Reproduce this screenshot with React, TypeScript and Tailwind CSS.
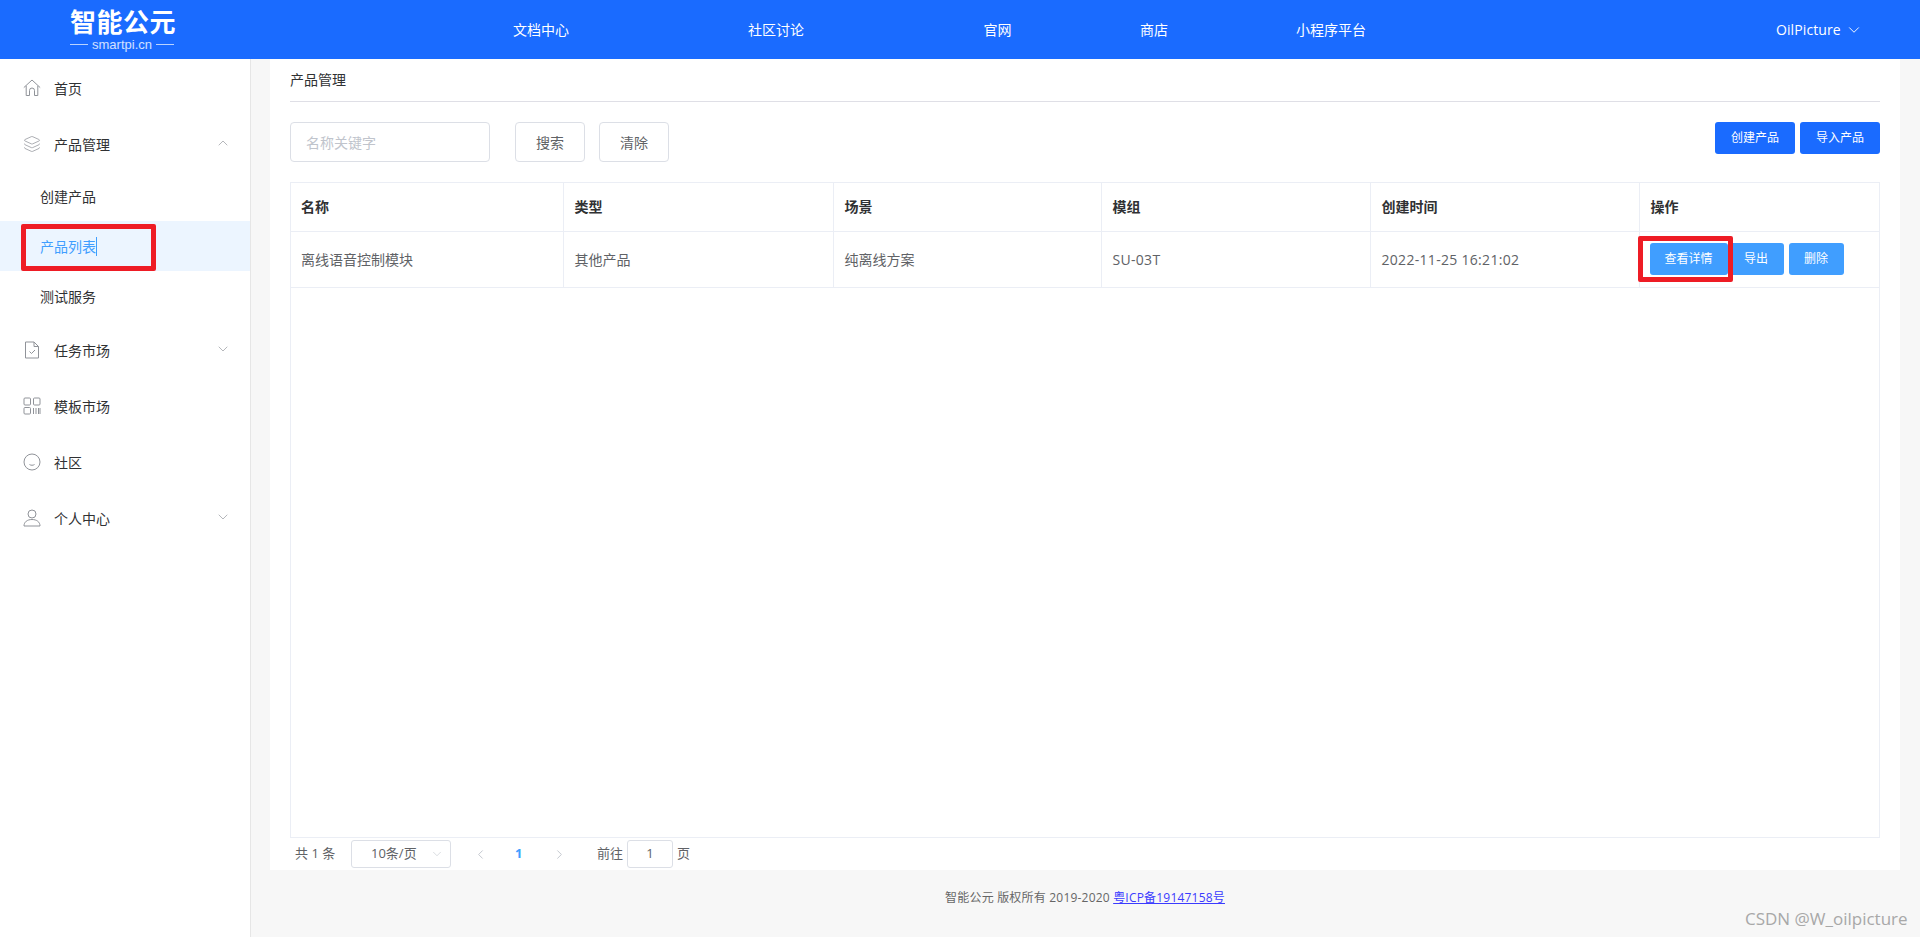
import React from 'react';
import { ChevronDown, ChevronLeft, ChevronRight, ChevronUp, Layers } from 'lucide-react';

const FONT = "font-['Open_Sans','Noto_Sans_CJK_SC',sans-serif]";

const navItems = [
  { label: '文档中心', width: 'w-[234px]' },
  { label: '社区讨论', width: 'w-[236px]' },
  { label: '官网', width: 'w-[207px]' },
  { label: '商店', width: 'w-[106px]' },
  { label: '小程序平台', width: 'w-[248px]' },
];

const columns = [
  { title: '名称', width: 'w-[272px] pl-[10px]', value: '离线语音控制模块', cell: 'pl-[10px]' },
  { title: '类型', width: 'w-[270px] pl-[11px]', value: '其他产品', cell: 'pl-[11px]' },
  { title: '场景', width: 'w-[268px] pl-[11px]', value: '纯离线方案', cell: 'pl-[11px]' },
  { title: '模组', width: 'w-[269px] pl-[11px]', value: 'SU-03T', cell: 'pl-[11px] tracking-[0.3px]' },
  { title: '创建时间', width: 'w-[269px] pl-[11px]', value: '2022-11-25 16:21:02', cell: 'pl-[11px] tracking-[0.3px]' },
];

const HomeIcon = () => (
  <svg width="18" height="18" viewBox="0 0 18 18" fill="none" stroke="#909399" strokeWidth="1">
    <path d="M0.8 8.6L9 1l8.2 7.6" />
    <path d="M3.2 6.8v9.7h3.3v-5a2.5 2.5 0 0 1 5 0v5h3.3V6.8" />
  </svg>
);

const TaskIcon = () => (
  <svg width="18" height="18" viewBox="0 0 18 18" fill="none" stroke="#909399" strokeWidth="1">
    <path d="M2.5 1h8.5l4.5 4.5v11.5h-13z" />
    <path d="M11 1v4.5h4.5" />
    <path d="M6.5 10.5l2 2 3.5-3.5" />
  </svg>
);

// 模板市场图标
const TemplateIcon = () => (
  <svg width="18" height="18" viewBox="0 0 18 18" fill="none" stroke="#909399" strokeWidth="1">
    <rect x="1" y="1" width="6.5" height="7" rx="1" />
    <rect x="10.5" y="1" width="6.5" height="7" rx="1" />
    <rect x="1" y="10.5" width="6.5" height="6.5" rx="1" />
    <path d="M10.5 11v6M13 11v6M15.5 11v6M17 11v6" />
  </svg>
);

// 社区图标
const SmileIcon = () => (
  <svg width="18" height="18" viewBox="0 0 18 18" fill="none" stroke="#909399" strokeWidth="1">
    <circle cx="9" cy="9" r="8" />
    <path d="M6.5 11.5c1.5 1 3.5 1 5 0" />
  </svg>
);

const UserIcon = () => (
  <svg width="18" height="18" viewBox="0 0 18 18" fill="none" stroke="#909399" strokeWidth="1">
    <circle cx="9" cy="5" r="4" />
    <path d="M1 17c0-4 3.2-6.5 8-6.5s8 2.500 8 6.500z" />
  </svg>
);

const MenuItem = ({
  icon,
  label,
  height,
  chevron,
}: {
  icon: React.ReactNode;
  label: string;
  height: string;
  chevron?: 'up' | 'down';
}) => (
  <div className={`flex items-center pl-[23px] pr-[19px] text-[14px] text-[#303133] ${height}`}>
    <span className="flex w-[18px] justify-center">{icon}</span>
    <span className="ml-[13px] flex-1">{label}</span>
    {chevron === 'up' && <ChevronUp size={16} strokeWidth={1} color="#909399" className="-mt-[3px]" />}
    {chevron === 'down' && <ChevronDown size={16} strokeWidth={1} color="#909399" className="-mt-[3px]" />}
  </div>
);

const ActionButton = ({ label, width }: { label: string; width: string }) => (
  <button className={`h-[32px] rounded-[3px] bg-[#409eff] text-[12px] text-white ${width}`}>{label}</button>
);

const App: React.FC = () => {
  return (
    <div className={`relative flex h-[937px] w-[1920px] flex-col overflow-hidden bg-[#f7f7f7] ${FONT}`}>
      {/* 顶部导航 */}
      <header className="flex h-[59px] shrink-0 items-center bg-[#1a6bff] text-white">
        <div className="flex w-[424px] flex-col items-start pl-[70px]">
          <div className="h-[28px] text-[26px] leading-[28px] font-bold tracking-[0.5px] whitespace-nowrap">智能公元</div>
          <div className="mt-[2px] flex w-[104px] items-center justify-between text-[13px] leading-[14px] font-['Liberation_Sans',sans-serif] text-white/80">
            <span className="h-px w-[18px] bg-white/70" />
            <span>smartpi.cn</span>
            <span className="h-px w-[18px] bg-white/70" />
          </div>
        </div>
        <nav className="flex text-[14px]">
          {navItems.map((item) => (
            <div key={item.label} className={`text-center ${item.width}`}>
              {item.label}
            </div>
          ))}
        </nav>
        <div className="ml-[321px] flex items-center gap-[4px] text-[14px] tracking-[0.1px]">
          OilPicture
          <ChevronDown size={18} strokeWidth={1.25} />
        </div>
      </header>

      <div className="flex min-h-0 flex-1">
        {/* 侧边栏 */}
        <aside className="w-[251px] shrink-0 border-r border-[#e6e6e6] bg-white pt-[6px]">
          <MenuItem icon={<HomeIcon />} label="首页" height="h-[46px]" />
          <div className="h-[10px]" />
          <MenuItem icon={<Layers size={22} strokeWidth={1} color="#909399" />} label="产品管理" height="h-[46px]" chevron="up" />
          <div className="mt-[4px] flex h-[50px] items-center pl-[40px] text-[14px] text-[#303133]">创建产品</div>
          <div className="flex h-[50px] items-center bg-[#ecf5ff] pl-[40px] text-[14px] text-[#409eff]">
            产品列表
            <span className="h-[19px] w-px bg-[#409eff]" />
          </div>
          <div className="flex h-[50px] items-center pl-[40px] text-[14px] text-[#303133]">测试服务</div>
          <div className="h-[6px]" />
          <MenuItem icon={<TaskIcon />} label="任务市场" height="h-[46px]" chevron="down" />
          <div className="h-[10px]" />
          <MenuItem icon={<TemplateIcon />} label="模板市场" height="h-[46px]" />
          <div className="h-[10px]" />
          <MenuItem icon={<SmileIcon />} label="社区" height="h-[46px]" />
          <div className="h-[10px]" />
          <MenuItem icon={<UserIcon />} label="个人中心" height="h-[46px]" chevron="down" />
        </aside>

        <main className="flex min-w-0 flex-1 flex-col pl-[19px] pr-[20px]">
          <section className="flex h-[811px] flex-col bg-white px-[20px]">
            <div className="flex h-[43px] shrink-0 items-center border-b border-[#dfdfe6] pb-[2px] text-[14px] text-[#303133]">
              产品管理
            </div>

            {/* 搜索栏 */}
            <div className="mt-[20px] flex h-[60px] shrink-0 items-start">
              <div className="flex h-[40px] w-[200px] items-center rounded-[4px] border border-[#dcdfe6] pl-[15px] text-[14px] text-[#c0c4cc]">
                名称关键字
              </div>
              <button className="ml-[25px] h-[40px] w-[70px] rounded-[4px] border border-[#dcdfe6] text-[14px] text-[#606266]">搜索</button>
              <button className="ml-[14px] h-[40px] w-[70px] rounded-[4px] border border-[#dcdfe6] text-[14px] text-[#606266]">清除</button>
              <div className="ml-auto flex gap-[5px]">
                <button className="h-[32px] w-[80px] rounded-[3px] bg-[#1a6bff] text-[12px] text-white">创建产品</button>
                <button className="h-[32px] w-[80px] rounded-[3px] bg-[#1a6bff] text-[12px] text-white">导入产品</button>
              </div>
            </div>

            {/* 产品表格 */}
            <div className="h-[656px] shrink-0 border border-[#ebeef5]">
              <table className="w-full table-fixed border-collapse text-[14px]">
                <thead>
                  <tr className="h-[48px] border-b border-[#ebeef5] text-left text-[#303133]">
                    {columns.map((col) => (
                      <th key={col.title} className={`border-r border-[#ebeef5] font-bold ${col.width}`}>
                        {col.title}
                      </th>
                    ))}
                    <th className="pl-[11px] font-bold">操作</th>
                  </tr>
                </thead>
                <tbody>
                  <tr className="h-[56px] border-b border-[#ebeef5] text-[#606266]">
                    {columns.map((col) => (
                      <td key={col.title} className={`border-r border-[#ebeef5] ${col.cell}`}>
                        {col.value}
                      </td>
                    ))}
                    <td className="pl-[10px]">
                      <div className="flex gap-[1px]">
                        <ActionButton label="查看详情" width="w-[78px]" />
                        <ActionButton label="导出" width="w-[55px]" />
                        <ActionButton label="删除" width="ml-[4px] w-[55px]" />
                      </div>
                    </td>
                  </tr>
                </tbody>
              </table>
            </div>

            {/* 分页 */}
            <div className="flex flex-1 items-center pl-[5px] text-[13px] text-[#606266]">
              <span className="w-[56px]">共 1 条</span>
              <div className="flex h-[28px] w-[100px] items-center rounded-[3px] border border-[#dcdfe6] pl-[19px] pr-[6px]">
                <span className="flex-1">10条/页</span>
                <ChevronDown size={14} strokeWidth={1} color="#c0c4cc" />
              </div>
              <ChevronLeft size={15} strokeWidth={1.5} color="#c0c4cc" className="ml-[22px]" />
              <span className="ml-[27px] w-[9px] font-bold text-[#409eff]">1</span>
              <ChevronRight size={15} strokeWidth={1.5} color="#c0c4cc" className="ml-[28px]" />
              <span className="ml-[30px]">前往</span>
              <div className="ml-[4px] flex h-[28px] w-[46px] items-center justify-center rounded-[3px] border border-[#dcdfe6]">1</div>
              <span className="ml-[4px]">页</span>
            </div>
          </section>

          <footer className="flex flex-1 items-start justify-center pt-[19px] text-[12px] tracking-[0.2px] text-[#666]">
            智能公元 版权所有 2019-2020&nbsp;
            <a className="text-[#3b3bff] underline">粤ICP备19147158号</a>
          </footer>
        </main>
      </div>

      {/* 截图上的红色标注框 */}
      <div className="absolute top-[224px] left-[21px] h-[47px] w-[135px] rounded-[2px] border-[5px] border-[#ee1c25]" />
      <div className="absolute top-[236px] left-[1638px] h-[46px] w-[95px] rounded-[2px] border-[5px] border-[#ee1c25]" />
      {/* 水印 */}
      <div className="absolute top-[906px] left-[1745px] text-[17px] whitespace-nowrap text-[#a8a8a8]">CSDN @W_oilpicture</div>
    </div>
  );
};

export default App;
